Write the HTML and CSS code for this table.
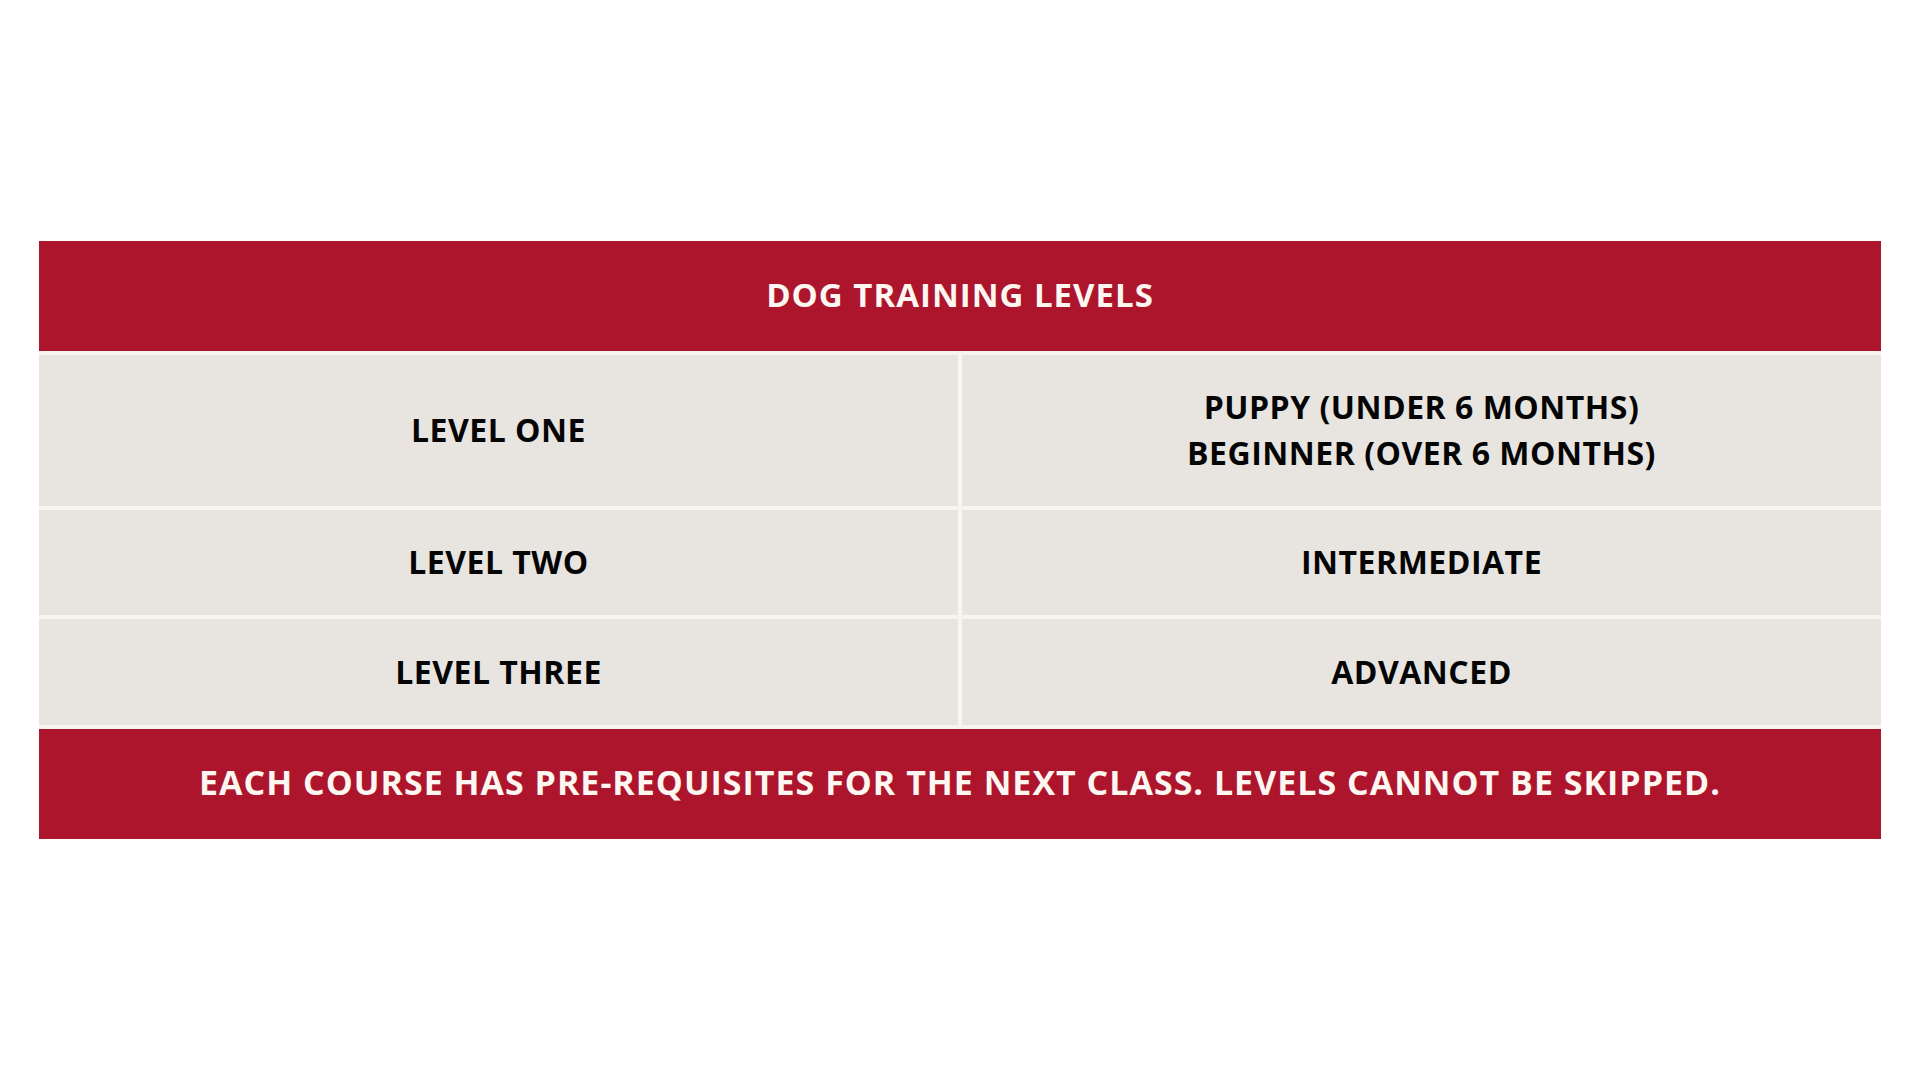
FILE: index.html
```html
<!DOCTYPE html>
<html>
<head>
<meta charset="utf-8">
<link rel="stylesheet" href="styles.css">
</head>
<body>
<div class="page">
  <div class="table">
    <div class="bar title">DOG TRAINING LEVELS</div>
    <div class="grid">
      <div class="cell r1">LEVEL ONE</div>
      <div class="cell r1">PUPPY (UNDER 6 MONTHS)<br>BEGINNER (OVER 6 MONTHS)</div>
      <div class="cell r2">LEVEL TWO</div>
      <div class="cell r2">INTERMEDIATE</div>
      <div class="cell r3">LEVEL THREE</div>
      <div class="cell r3">ADVANCED</div>
    </div>
    <div class="bar note">EACH COURSE HAS PRE-REQUISITES FOR THE NEXT CLASS. LEVELS CANNOT BE SKIPPED.</div>
  </div>
</div>
</body>
</html>
```
FILE: styles.css
```css
html, body {
  margin: 0;
  padding: 0;
  background: #ffffff;
}
.page {
  width: 1920px;
  height: 1080px;
  padding-top: 241px;
  padding-left: 39px;
  box-sizing: border-box;
}
.table {
  width: 1842px;
  display: flex;
  flex-direction: column;
  gap: 4px;
  background: #f8f5f1;
  font-family: "Open Sans", "DejaVu Sans", sans-serif;
  font-weight: 700;
  font-size: 32px;
}
.bar {
  height: 110px;
  box-sizing: border-box;
  padding-bottom: 4px;
  background: #ad152d;
  color: #fdf6f1;
  display: flex;
  align-items: center;
  justify-content: center;
  text-align: center;
}
.title {
  font-size: 33px;
  letter-spacing: 1px;
}
.note {
  font-size: 34px;
  letter-spacing: 1px;
}
.grid {
  display: grid;
  grid-template-columns: 919px 919px;
  grid-template-rows: 151px 105px 106px;
  gap: 4px;
}
.cell {
  background: #e8e5e1;
  color: #050505;
  display: flex;
  align-items: center;
  justify-content: center;
  text-align: center;
  line-height: 46px;
  letter-spacing: 0.5px;
  padding-bottom: 1px;
}
```
